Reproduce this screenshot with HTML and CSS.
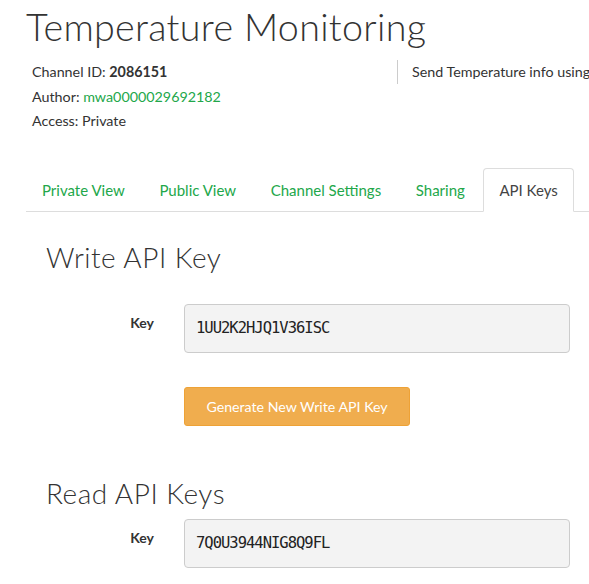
FILE: index.html
```html
<!DOCTYPE html>
<html>
<head>
<meta charset="utf-8">
<link rel="stylesheet" href="styles.css">
</head>
<body>
<div class="page">
  <h1 class="title">Temperature Monitoring</h1>
  <div class="meta">
    <div class="meta-left">
      <div class="meta-line">Channel ID: <strong>2086151</strong></div>
      <div class="meta-line">Author: <span class="green">mwa0000029692182</span></div>
      <div class="meta-line">Access: Private</div>
    </div>
    <div class="meta-right">Send Temperature info using ESP32</div>
  </div>
  <ul class="tabs">
    <li class="tab"><a>Private View</a></li>
    <li class="tab"><a>Public View</a></li>
    <li class="tab"><a>Channel Settings</a></li>
    <li class="tab"><a>Sharing</a></li>
    <li class="tab active"><a>API Keys</a></li>
  </ul>
  <div class="content">
    <h2 class="section-title first">Write API Key</h2>
    <div class="row">
      <label class="label">Key</label>
      <div class="key-box">1UU2K2HJQ1V36ISC</div>
    </div>
    <div class="row btn-row">
      <div class="spacer"></div>
      <button class="btn">Generate New Write API Key</button>
    </div>
    <h2 class="section-title second">Read API Keys</h2>
    <div class="row">
      <label class="label">Key</label>
      <div class="key-box">7Q0U3944NIG8Q9FL</div>
    </div>
  </div>
</div>
</body>
</html>
```
FILE: styles.css
```css
html, body {
  margin: 0;
  padding: 0;
  background: #fff;
  overflow: hidden;
}
body {
  font-family: "Lato", "Liberation Sans", sans-serif;
  color: #333;
  font-size: 14.3px;
}
.page {
  padding-left: 26px;
}
.title {
  margin: 0;
  padding-top: 6px;
  font-family: "Lato", sans-serif;
  font-weight: 300;
  font-size: 37.7px;
  line-height: 42px;
  color: #333;
  letter-spacing: 0.3px;
  white-space: nowrap;
}
.meta {
  display: flex;
  margin-top: 12px;
}
.meta-left {
  flex: 0 0 365px;
  padding-left: 6px;
}
.meta-line {
  line-height: 24.5px;
}
.meta-line strong {
  font-weight: 700;
}
.green {
  color: #22a74a;
}
.meta-right {
  flex: 1;
  min-width: 0;
  overflow: hidden;
  border-left: 1px solid #ccc;
  padding-left: 14px;
  height: 24px;
  line-height: 24px;
  white-space: nowrap;
}
.tabs {
  list-style: none;
  margin: 34px 0 0 0;
  padding: 0;
  display: flex;
  border-bottom: 1px solid #ddd;
}
.tab {
  margin-right: 2.6px;
  margin-bottom: -1px;
}
.tab a {
  display: block;
  padding: 10px 15px 9px;
  line-height: 23px;
  color: #22a74a;
  border: 1px solid transparent;
  border-radius: 4px 4px 0 0;
  font-size: 15px;
  white-space: nowrap;
}
.tab.active a {
  color: #444;
  background: #fff;
  border-color: #ddd #ddd transparent #ddd;
}
.content {
  padding-left: 20px;
  width: 524px;
}
.section-title {
  margin: 0;
  font-family: "Lato", sans-serif;
  font-weight: 300;
  font-size: 28px;
  line-height: 32px;
  color: #333;
  letter-spacing: 0.5px;
}
.section-title.first {
  margin-top: 29px;
  margin-bottom: 31px;
}
.section-title.second {
  margin-top: 51px;
  margin-bottom: 10px;
}
.row {
  display: flex;
  align-items: flex-start;
}
.label {
  width: 108px;
  text-align: right;
  font-weight: 700;
  font-size: 14px;
  padding-top: 10px;
  margin-right: 30px;
  color: #333;
}
.spacer {
  width: 108px;
  margin-right: 30px;
}
.key-box {
  width: 373px;
  height: 47px;
  line-height: 47px;
  background: #f3f3f3;
  border: 1px solid #ccc;
  border-radius: 4px;
  padding-left: 11px;
  font-family: "DejaVu Sans Mono", monospace;
  font-size: 15.5px;
  letter-spacing: -1px;
  color: #222;
}
.btn-row {
  margin-top: 34px;
}
.btn {
  background: #f0ad4e;
  border: 1px solid #eea236;
  border-radius: 3px;
  color: #fff;
  font-family: "Lato", sans-serif;
  font-size: 14.2px;
  height: 39px;
  width: 226px;
  padding: 0;
}
```
